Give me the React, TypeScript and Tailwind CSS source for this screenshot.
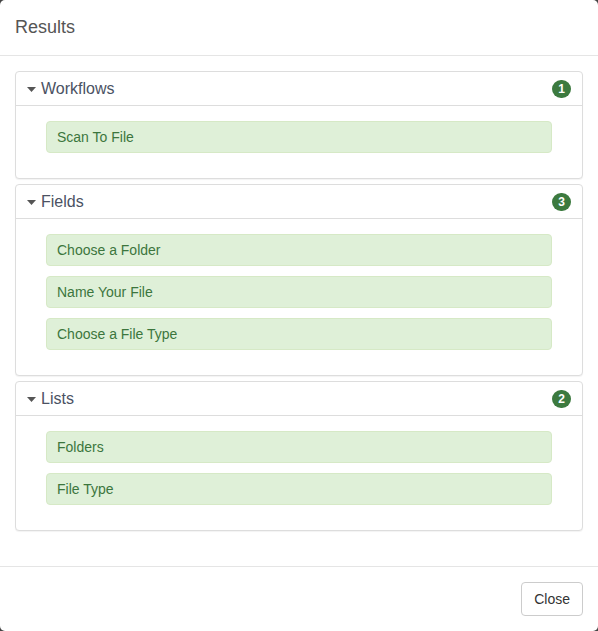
import React from "react";

const font = { fontFamily: '"Liberation Sans", Arial, Helvetica, sans-serif' };

function Panel({ title, count, items }: { title: string; count: number; items: string[] }) {
  return (
    <div className="border border-[#ddd] rounded-[4px] bg-white shadow-[0_1px_1px_rgba(0,0,0,0.05)]">
      <div className="h-[34px] border-b border-[#ddd] rounded-t-[3px] flex items-center pl-[11px] pr-[11px]">
        <svg width="9" height="5" viewBox="0 0 9 5" className="mr-[5px] mt-[1px]">
          <path d="M0 0 L9 0 L4.5 5 Z" fill="#555" />
        </svg>
        <span className="text-[16px] text-[#4b5263] leading-none">{title}</span>
        <span className="ml-auto w-[19px] h-[18px] rounded-full bg-[#3c7a3f] text-white text-[12px] font-bold flex items-center justify-center leading-none">
          {count}
        </span>
      </div>
      <div className="pt-[15px] pb-[15px] px-[30px] flex flex-col gap-[10px]">
        {items.map((it) => (
          <div
            key={it}
            className="h-[32px] bg-[#dff0d8] border border-[#d6e9c6] rounded-[4px] flex items-center pl-[10px] text-[14px] text-[#3c763d]"
          >
            {it}
          </div>
        ))}
        <div className="h-0" />
      </div>
    </div>
  );
}

export default function App() {
  return (
    <div className="w-[598px] h-[631px] bg-[#444]" style={font}>
      <div className="w-full h-full bg-white rounded-[5px] flex flex-col">
        <div className="h-[56px] border-b border-[#e5e5e5] px-[15px] flex items-center pb-[1px]">
          <span className="text-[18px] text-[#555]">Results</span>
        </div>
        <div className="px-[15px] pt-[15px] flex-1 flex flex-col gap-[5px]">
          <Panel title="Workflows" count={1} items={["Scan To File"]} />
          <Panel title="Fields" count={3} items={["Choose a Folder", "Name Your File", "Choose a File Type"]} />
          <Panel title="Lists" count={2} items={["Folders", "File Type"]} />
        </div>
        <div className="border-t border-[#e5e5e5] h-[65px] flex items-center justify-end px-[15px]">
          <button className="h-[34px] px-[12px] border border-[#ccc] rounded-[4px] bg-white text-[14px] text-[#333]">
            Close
          </button>
        </div>
      </div>
    </div>
  );
}
